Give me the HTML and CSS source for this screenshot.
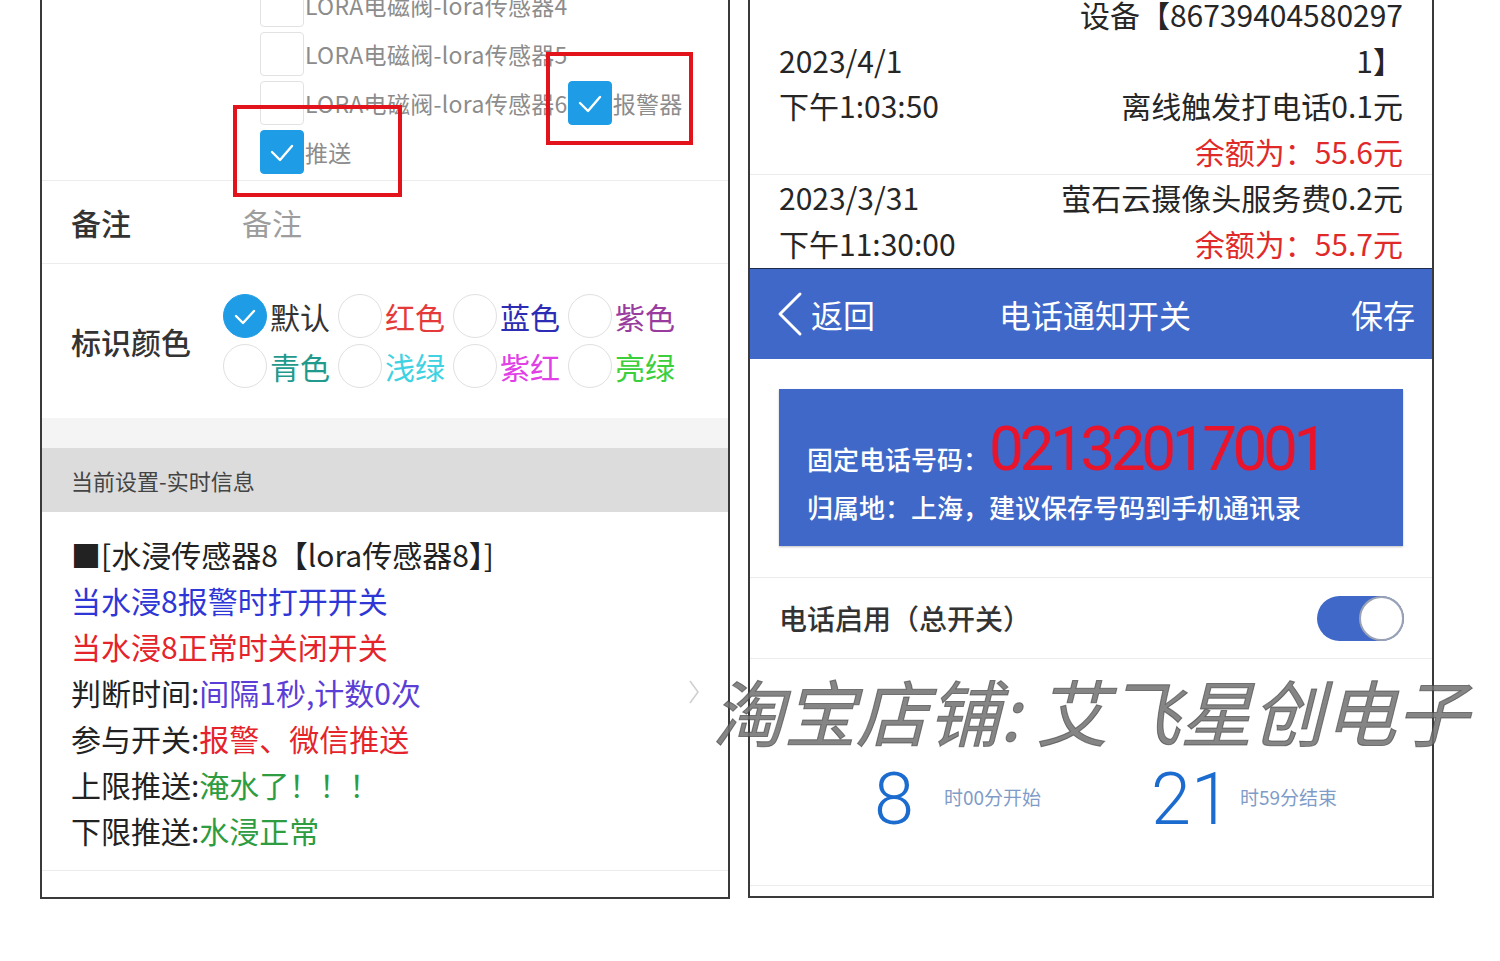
FILE: index.html
```html
<!DOCTYPE html>
<html lang="zh-CN">
<head>
    <meta charset="UTF-8">
    <meta name="viewport" content="width=device-width, initial-scale=1.0">
    <title>水浸传感器设置 - 电话通知开关</title>
    <link rel="stylesheet" href="styles.css">
</head>
<body>
    <div class="page">
        <section class="phone phone-left">
            <div class="checks">
                <label class="check"><span class="box"></span><span class="check-text">LORA电磁阀-lora传感器4</span></label>
                <label class="check"><span class="box"></span><span class="check-text">LORA电磁阀-lora传感器5</span></label>
                <label class="check"><span class="box"></span><span class="check-text">LORA电磁阀-lora传感器6</span></label>
                <label class="check on">
                    <span class="box"><svg viewBox="0 0 44 44" width="44" height="44"><polyline points="12,22 20,30 32,16" /></svg></span>
                    <span class="check-text">报警器</span>
                </label>
                <label class="check on">
                    <span class="box"><svg viewBox="0 0 44 44" width="44" height="44"><polyline points="12,22 20,30 32,16" /></svg></span>
                    <span class="check-text">推送</span>
                </label>
            </div>

            <div class="form-row note-row">
                <span class="form-label">备注</span>
                <span class="placeholder">备注</span>
            </div>

            <div class="form-row color-row">
                <span class="form-label">标识颜色</span>
                <div class="radios">
                    <label class="radio on">
                        <span class="dot"><svg viewBox="0 0 44 44" width="44" height="44"><polyline points="13,22 20,29 31,17" /></svg></span>
                        <span class="c-default">默认</span>
                    </label>
                    <label class="radio"><span class="dot"></span><span class="c-red">红色</span></label>
                    <label class="radio"><span class="dot"></span><span class="c-blue">蓝色</span></label>
                    <label class="radio"><span class="dot"></span><span class="c-purple">紫色</span></label>
                    <label class="radio"><span class="dot"></span><span class="c-teal">青色</span></label>
                    <label class="radio"><span class="dot"></span><span class="c-cyan">浅绿</span></label>
                    <label class="radio"><span class="dot"></span><span class="c-magenta">紫红</span></label>
                    <label class="radio"><span class="dot"></span><span class="c-green">亮绿</span></label>
                </div>
            </div>

            <div class="gap-band"></div>
            <div class="section-title">当前设置-实时信息</div>

            <div class="info">
                <div class="info-lines">
                    <div>■[水浸传感器8【lora传感器8】]</div>
                    <div class="t-blue">当水浸8报警时打开开关</div>
                    <div class="t-red">当水浸8正常时关闭开关</div>
                    <div>判断时间:<span class="t-violet">间隔1秒,计数0次</span></div>
                    <div>参与开关:<span class="t-red">报警、微信推送</span></div>
                    <div>上限推送:<span class="t-green">淹水了！！！</span></div>
                    <div>下限推送:<span class="t-green">水浸正常</span></div>
                </div>
                <svg class="chevron" viewBox="0 0 12 26" width="12" height="26"><polyline points="2,2 10,13 2,24" /></svg>
            </div>

            <div class="mark mark-push"></div>
            <div class="mark mark-alarm"></div>
        </section>

        <section class="phone phone-right">
            <div class="record record-first">
                <div class="rec-date">2023/4/1<br>下午1:03:50</div>
                <div class="rec-detail">
                    设备【86739404580297<br>1】<br>离线触发打电话0.1元<br>
                    <span class="balance">余额为：55.6元</span>
                </div>
            </div>
            <div class="record record-last">
                <div class="rec-date">2023/3/31<br>下午11:30:00</div>
                <div class="rec-detail">
                    萤石云摄像头服务费0.2元<br>
                    <span class="balance">余额为：55.7元</span>
                </div>
            </div>

            <div class="navbar">
                <div class="nav-back">
                    <svg viewBox="0 0 30 50" width="30" height="50"><polyline points="25,5 5,25 25,45" /></svg>
                    <span>返回</span>
                </div>
                <div class="nav-title">电话通知开关</div>
                <div class="nav-save">保存</div>
            </div>

            <div class="card-wrap">
                <div class="phone-card">
                    <div class="card-line">
                        <span class="card-label">固定电话号码：</span>
                        <span class="card-number">02132017001</span>
                    </div>
                    <div class="card-sub">归属地：上海，建议保存号码到手机通讯录</div>
                </div>
            </div>

            <div class="switch-row">
                <span>电话启用（总开关）</span>
                <span class="toggle"><span class="knob"></span></span>
            </div>

            <div class="time-row">
                <div class="time-group">
                    <span class="time-num">8</span>
                    <span class="time-text">时00分开始</span>
                </div>
                <div class="time-group time-group-end">
                    <span class="time-num">21</span>
                    <span class="time-text">时59分结束</span>
                </div>
            </div>
        </section>

        <div class="watermark">淘宝店铺: 艾飞星创电子</div>
    </div>
</body>
</html>
```

FILE: styles.css
```css
:root {
    --frame-color: #3a3a3a;
    --line-color: #ececec;
    --text-color: #262626;
    --app-blue: #4068c8;
    --check-blue: #1e9de6;
    --mark-red: #e3131b;
}
body {
    margin: 0;
    background-color: #fff;
    font-family: "Noto Sans CJK SC", "Noto Sans", sans-serif;
    color: var(--text-color);
}
.page {
    position: relative;
    display: flex;
    gap: 18px;
    padding-left: 40px;
    height: 961px;
    overflow: hidden;
}
.phone {
    position: relative;
    box-sizing: border-box;
    border: 2px solid var(--frame-color);
    border-top: none;
    overflow: hidden;
    background-color: #fff;
}
.phone-left {
    width: 690px;
    height: 899px;
}
.phone-right {
    width: 686px;
    height: 898px;
}

/* checkbox list */
.checks {
    display: flex;
    flex-wrap: wrap;
    margin-top: -20px;
    padding: 0 18px 4px 218px;
    border-bottom: 1px solid var(--line-color);
}
.check {
    display: flex;
    align-items: center;
    height: 49px;
}
.box {
    box-sizing: border-box;
    width: 44px;
    height: 44px;
    border: 1px solid #e2e2e2;
    border-radius: 4px;
    background-color: #fff;
}
.check.on .box {
    border-color: var(--check-blue);
    background-color: var(--check-blue);
}
.box svg, .dot svg {
    display: block;
    margin: -1px;
}
.box polyline, .dot polyline {
    fill: none;
    stroke: #fff;
    stroke-width: 2.4;
    stroke-linecap: round;
    stroke-linejoin: round;
}
.check-text {
    font-size: 23px;
    letter-spacing: 0.3px;
    color: #8c8c8c;
    margin-left: 1px;
    white-space: nowrap;
}

/* form rows */
.form-row {
    display: flex;
    align-items: center;
    padding-left: 29px;
    border-bottom: 1px solid var(--line-color);
    font-size: 30px;
}
.form-label {
    font-weight: 500;
    color: #333;
}
.note-row {
    height: 82px;
}
.note-row .form-label {
    width: 171px;
}
.placeholder {
    color: #9d9d9d;
}
.color-row {
    height: 154px;
    border-bottom: none;
}
.color-row .form-label {
    width: 152px;
}
.radios {
    display: grid;
    grid-template-columns: repeat(4, 115px);
    grid-auto-rows: 50px;
}
.radio {
    display: flex;
    align-items: center;
}
.dot {
    box-sizing: border-box;
    width: 44px;
    height: 44px;
    border: 1px solid #e0e0e0;
    border-radius: 50%;
    margin-right: 3px;
}
.radio.on .dot {
    border-color: var(--check-blue);
    background-color: var(--check-blue);
}
.c-default { color: #333; }
.c-red { color: #e53a3a; }
.c-blue { color: #2c2cb4; }
.c-purple { color: #9a3c9e; }
.c-teal { color: #1f9a8c; }
.c-cyan { color: #3fd2e2; }
.c-magenta { color: #e040e6; }
.c-green { color: #3ccf3c; }

.gap-band {
    height: 30px;
    background-color: #f4f4f4;
}
.section-title {
    height: 64px;
    line-height: 64px;
    padding-left: 29px;
    background-color: #dcdcdc;
    font-size: 22px;
    color: #444;
}

/* realtime info */
.info {
    display: flex;
    align-items: center;
    justify-content: space-between;
    padding: 19px 28px 17px 29px;
    border-bottom: 1px solid var(--line-color);
}
.info-lines {
    font-size: 30px;
    line-height: 46px;
    color: #222;
}
.t-blue { color: #2f36d6; }
.t-red { color: #e5232b; }
.t-violet { color: #5a3ed6; }
.t-green { color: #2e9c40; }
.chevron polyline {
    fill: none;
    stroke: #d0d0d0;
    stroke-width: 1.6;
}

/* red annotation frames */
.mark {
    position: absolute;
    box-sizing: border-box;
    border: 4px solid var(--mark-red);
}
.mark-push {
    left: 191px;
    top: 105px;
    width: 169px;
    height: 92px;
}
.mark-alarm {
    left: 504px;
    top: 52px;
    width: 147px;
    height: 93px;
}

/* right phone: billing records */
.record {
    display: flex;
    align-items: center;
    justify-content: space-between;
    padding: 0 29px;
    font-size: 30px;
    line-height: 45.5px;
}
.record-first {
    margin-top: -8px;
    border-bottom: 1px solid var(--line-color);
}
.record-last {
    padding-bottom: 2px;
}
.rec-detail {
    text-align: right;
}
.balance {
    color: #e02a2a;
}

.navbar {
    display: grid;
    grid-template-columns: 1fr auto 1fr;
    align-items: center;
    height: 90px;
    padding: 0 17px 0 25px;
    border-top: 1px solid #1f2b4c;
    background-color: var(--app-blue);
    color: #fff;
    font-size: 32px;
}
.nav-back {
    display: flex;
    align-items: center;
    gap: 6px;
}
.nav-back polyline {
    fill: none;
    stroke: #fff;
    stroke-width: 3;
    stroke-linecap: round;
    stroke-linejoin: round;
}
.nav-save {
    justify-self: end;
}

.card-wrap {
    padding: 30px 29px 31px;
    border-bottom: 1px solid var(--line-color);
}
.phone-card {
    height: 157px;
    box-sizing: border-box;
    padding: 29px 28px 0;
    background-color: var(--app-blue);
    box-shadow: 0 1px 2px rgba(0, 0, 0, 0.25);
    color: #fff;
}
.card-line {
    display: flex;
    align-items: baseline;
    height: 62px;
}
.card-label {
    font-size: 26px;
    font-weight: 500;
}
.card-number {
    font-family: Roboto, "Liberation Sans", sans-serif;
    font-size: 62px;
    line-height: 1;
    letter-spacing: -4.4px;
    color: #e8142c;
}
.card-sub {
    margin-top: 9px;
    font-size: 26px;
    line-height: 36px;
    font-weight: 500;
}

.switch-row {
    display: flex;
    align-items: center;
    justify-content: space-between;
    height: 80px;
    padding: 0 28px 0 29px;
    border-bottom: 1px solid var(--line-color);
    font-size: 28px;
    font-weight: 500;
    color: #333;
}
.toggle {
    position: relative;
    display: block;
    width: 87px;
    height: 45px;
    border-radius: 23px;
    background-color: var(--app-blue);
}
.knob {
    position: absolute;
    right: 0;
    top: 0;
    box-sizing: border-box;
    width: 45px;
    height: 45px;
    border-radius: 50%;
    border: 2px solid #9aa3b5;
    background-color: #fff;
}

.time-row {
    display: flex;
    align-items: center;
    gap: 110px;
    height: 80px;
    padding: 101px 0 45px 124px;
    border-bottom: 1px solid var(--line-color);
}
.time-group {
    display: flex;
    align-items: center;
    gap: 30px;
}
.time-group-end {
    gap: 9px;
}
.time-num {
    font-family: Roboto, "Liberation Sans", sans-serif;
    font-weight: 300;
    font-size: 72px;
    line-height: 80px;
    color: #1c6ccf;
}
.time-text {
    font-size: 19px;
    color: #7f9cc8;
    margin-top: -8px;
}

/* shop watermark over both screenshots */
.watermark {
    position: absolute;
    left: 712px;
    top: 666px;
    font-size: 72px;
    line-height: 88px;
    font-style: italic;
    white-space: nowrap;
    color: rgba(112, 112, 112, 0.85);
    -webkit-text-stroke: 1px rgba(60, 60, 60, 0.6);
}
```
